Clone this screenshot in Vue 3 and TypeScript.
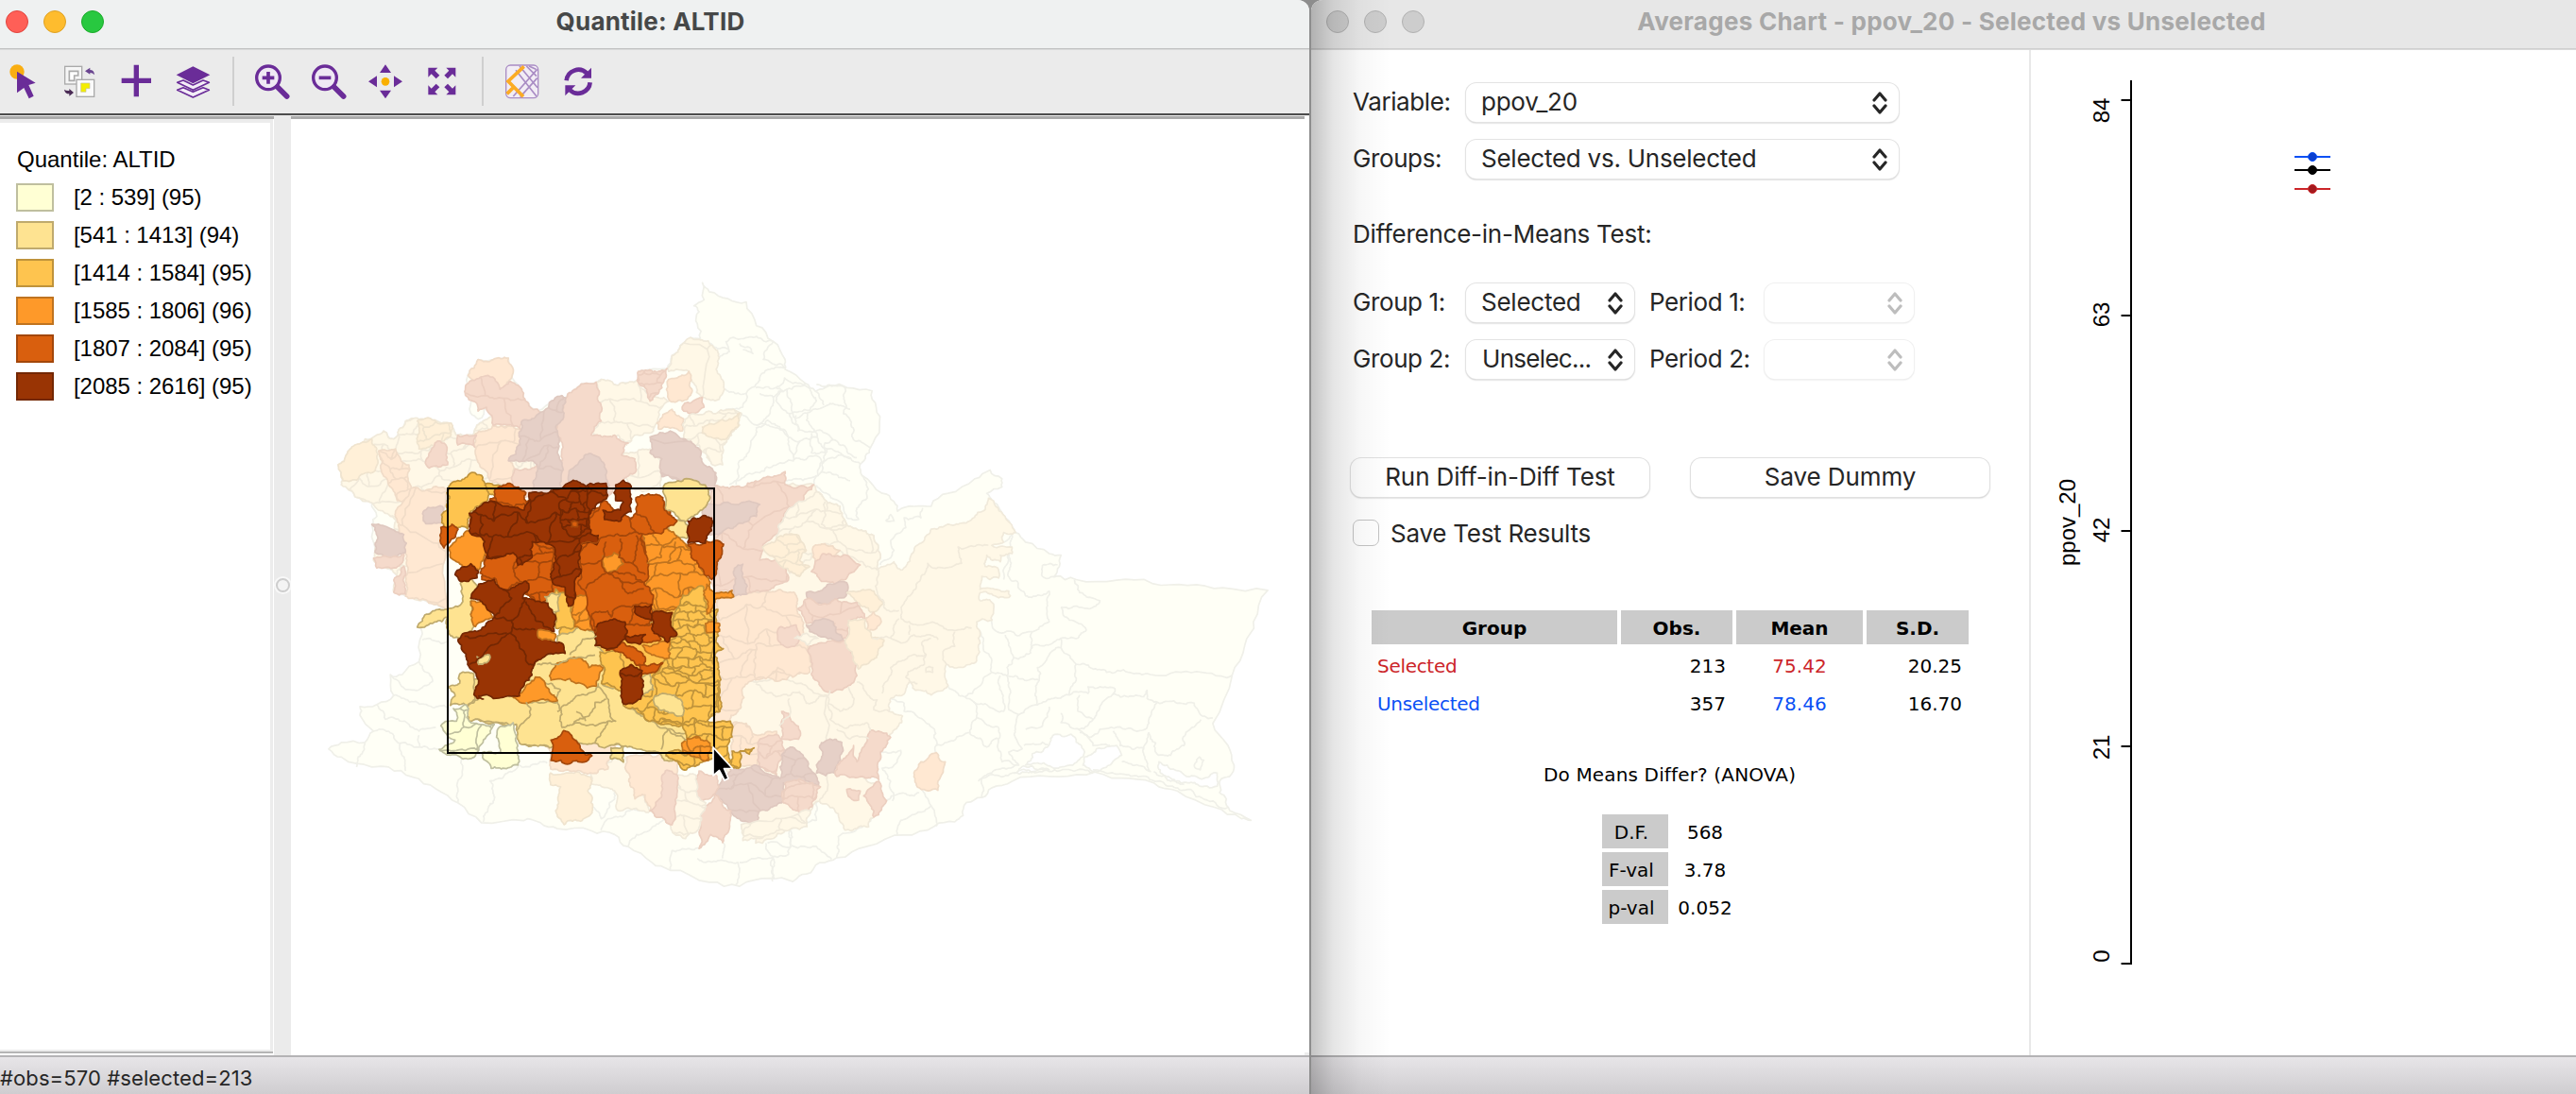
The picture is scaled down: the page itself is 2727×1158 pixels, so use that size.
<script setup lang="ts">
type Pt = [number, number]
type Space = 'a' | 'b' | 'c'

interface Region {
  cls: string
  d: string
  mesh?: string
  clip: string
}

/* Three survey sheets share the canvas; each has its own origin and scale. */
const sheets: Record<Space, (x: number, y: number) => Pt> = {
  a: (x, y) => [340 + x / 2.8, 290 + y / 2.376],
  b: (x, y) => [460 + x / 3, 490 + y / 3],
  c: (x, y) => [800 + x / 2.8, 400 + y / 2.904],
}

function pts(space: Space, text: string): Pt[] {
  return text.trim().split(/\s+/).map((p) => {
    const [x, y] = p.split(',').map(Number)
    return sheets[space](x, y)
  })
}

function noise(x: number, y: number): number {
  const s = Math.sin(x * 12.9898 + y * 78.233) * 43758.5453
  return (s - Math.floor(s)) * 2 - 1
}

/* Midpoint displacement; symmetric in its ends so that shared borders agree. */
function split(p: Pt, q: Pt, depth: number, out: Pt[]): void {
  const dx = q[0] - p[0]
  const dy = q[1] - p[1]
  const len = Math.hypot(dx, dy)
  if (depth === 0 || len < 3) {
    out.push(q)
    return
  }
  const flip = p[0] < q[0] || (p[0] === q[0] && p[1] < q[1]) ? 1 : -1
  const off = (noise(p[0] + q[0], p[1] + q[1]) * Math.min(2.6, len * 0.2) * flip) / len
  const mid: Pt = [(p[0] + q[0]) / 2 - dy * off, (p[1] + q[1]) / 2 + dx * off]
  split(p, mid, depth - 1, out)
  split(mid, q, depth - 1, out)
}

function trace(points: Pt[], close: boolean, depth = 4): string {
  const out: Pt[] = [points[0]]
  for (let i = 1; i < points.length; i++) split(points[i - 1], points[i], depth, out)
  if (close) split(points[points.length - 1], points[0], depth, out)
  return 'M' + out.map((p) => p[0].toFixed(1) + ' ' + p[1].toFixed(1)).join('L') + (close ? 'Z' : '')
}

/* Honeycomb of irregular cells covering the box of a region. */
function meshOf(points: Pt[], size: number): string {
  const xs = points.map((p) => p[0])
  const ys = points.map((p) => p[1])
  const x0 = Math.floor(Math.min(...xs) / size) - 1
  const x1 = Math.ceil(Math.max(...xs) / size) + 1
  const y0 = Math.floor(Math.min(...ys) / size) - 1
  const y1 = Math.ceil(Math.max(...ys) / size) + 1
  const at = (i: number, j: number): Pt => [
    (i + noise(i * 3.1, j * 7.7) * 0.42) * size,
    (j + noise(j * 5.3, i * 2.9) * 0.42) * size,
  ]
  let d = ''
  for (let j = y0; j < y1; j++) {
    for (let i = x0; i < x1; i++) {
      d += trace([at(i, j), at(i + 1, j)], false, 3)
      if ((i + j) % 2 === 0) d += trace([at(i, j), at(i, j + 1)], false, 3)
    }
  }
  return d
}

let serial = 0
function region(cls: string, space: Space, text: string, mesh = 0): Region {
  const p = pts(space, text)
  return { cls, d: trace(p, true), mesh: mesh ? meshOf(p, mesh) : undefined, clip: 'clip-' + serial++ }
}

const outline = trace(
  [
    ...pts('a', '22,1195 60,1178 130,1178 155,1150 115,1110 115,1088 165,1083 215,1060 205,1008 240,1008 290,975 300,905 300,880 285,887 320,852 375,848 340,830 250,810 215,800 225,760 155,720 160,690 150,630 165,610 150,575 100,560 60,530 50,480 100,430 160,415 185,395 215,415 250,370 330,368 385,375 400,405 450,405 470,375 510,350 490,335 465,365 443,350 450,310 427,300 435,255 465,215 555,212 565,260 600,300 620,335 655,340 700,308 725,312 760,285 815,272 830,265 880,280 940,265 945,243 1025,238 1040,205 1095,160 1125,165 1115,125 1120,95 1105,80 1135,65 1130,22 1150,45 1205,62 1260,70 1290,130 1340,170 1375,215 1375,240 1435,275 1465,295 1510,280'),
    ...pts('c', '270,30 345,40 357,90 367,150 340,215 325,240 310,265 315,300 375,355 410,380 420,410 470,395 520,395 570,355 650,310 695,283 730,310 730,335 685,355 700,380 740,430 770,475 800,505 870,540 905,545 900,580 885,610 950,620 1070,622 1175,632 1280,638 1385,645 1518,653 1475,750 1450,820 1412,915 1355,1062 1400,1130 1418,1190 1405,1225 1375,1240 1375,1275 1395,1295 1405,1330 1468,1360 1440,1355 1360,1320 1250,1270 1180,1245 1080,1230 980,1220 870,1225 760,1240 700,1260 670,1290 625,1305 615,1345 590,1365 530,1378 440,1405 330,1440 240,1475 190,1490 150,1525 110,1548'),
    ...pts('a', '1330,1520 1240,1540 1150,1530 1035,1500 980,1480 910,1440 870,1410 800,1400 700,1395 650,1380 600,1375 475,1380 405,1330 340,1295 270,1265 200,1240 150,1240 60,1215'),
  ],
  true,
  2,
)

const paleLines: string[] = [
  ...[
    '130,1178 105,1240', '155,1150 200,1150 235,1180 250,1250', '165,1083 190,1120 240,1125 290,1150 340,1140', '235,1180 290,1190 290,1160', '215,1060 280,1075 330,1090 375,1090', '205,1008 250,1045 300,1040 330,1025 290,975', '300,920 375,925', '290,1190 350,1195 480,1210', '420,1215 405,1330', '585,1235 570,1250 500,1275 510,1330 480,1378', '585,1235 670,1230', '830,1400 850,1370 910,1350 975,1350', '910,1440 935,1410 1020,1370', '1035,1500 1040,1450 1120,1445', '1115,1470 1180,1475 1235,1480 1230,1538', '1240,1480 1340,1465 1340,1522', '1190,1430 1190,1470', '1340,1465 1385,1460 1390,1400', '805,1340 830,1370 870,1320 880,1290', '1120,165 1210,195 1200,170 1260,160 1340,170', '1210,195 1180,210', '1240,175 1280,200 1250,190', '1195,290 1260,300 1300,260 1330,240 1375,235', '1260,300 1250,335 1200,340 1190,370', '1300,300 1340,310 1380,290 1435,275', '1340,310 1320,360 1290,380 1245,350', '1290,390 1270,440 1240,470 1230,530', '1290,380 1370,395 1420,420 1400,470 1300,500 1210,530', '1420,420 1470,410 1440,350 1400,360 1380,290', '1470,410 1500,440 1568,465', '1440,350 1500,330 1568,340', '1500,440 1480,500 1460,530', '1480,500 1568,520', '1465,295 1490,330', '1340,170 1310,215 1375,235',
  ].map((t) => trace(pts('a', t), false)),
  ...[
    '0,30 60,30 85,0 140,20 180,70 160,100 100,110 60,70 80,40 60,30', '180,20 270,30', '265,30 260,110 280,130 285,180 340,215', '100,110 130,160 190,160 230,190 300,245', '165,170 165,230 205,230 205,200 230,190', '0,155 35,130 90,165 100,215 115,250 190,245 185,300 140,315 85,315', '190,265 260,240 310,265', '180,330 240,375 270,430 305,435 300,400 330,370 325,315 315,300', '120,115 125,165', '370,575 410,530 400,500 445,460 440,430 490,430 495,400', '385,440 400,420 410,440 385,440', '735,505 760,475', '750,540 755,620 775,625 800,670 870,655 865,700 870,750 815,780 770,790 715,780 700,740', '760,480 735,620', '850,575 850,610 890,610', '850,575 895,575', '945,620 960,660 1020,685 990,710 905,705', '905,705 930,745 980,775 955,800 905,800 815,830', '905,800 905,830 950,880 1040,905 1170,912 1412,915', '740,790 755,830 765,860 815,845 820,780', '765,860 745,890 745,915 840,930 835,890 890,830 905,830', '745,915 755,960 750,1020 780,1035 835,1005 840,930', '650,760 700,870 700,905 745,915', '700,905 660,950 620,980 565,940', '620,980 645,995 735,1025 725,915', '645,995 655,1045 635,1090 535,1130 530,1080 460,1025 440,1025 440,1000 400,985', '635,1090 685,1135 720,1110 720,1075 655,1045', '535,1130 535,1152', '780,1035 770,1080 790,1140 750,1150 780,1190', '720,1110 730,1180 780,1190 730,1200 670,1230 670,1290', '835,1005 860,995 930,975 950,930 950,880', '930,975 985,970 985,950 1065,955 1060,970 1150,980 1160,960 1160,985 1250,1000 1300,1000 1330,1040 1355,1045', '960,975 955,1025 1000,1050 1020,1010 1065,970', '905,1030 905,1060 960,1080 1000,1050', '1190,995 1170,1040 1155,1080 1020,1080 1000,1100 955,1080', '1320,1050 1275,1090 1270,1130 1230,1160 1195,1160 1165,1090', '800,1080 850,1070 870,1010', '795,1130 850,1120 870,1130', '1060,1085 1080,1130 1150,1140 1165,1090', '1150,1140 1170,1210 1085,1180', '1300,1195 1315,1165 1328,1175 1318,1205 1300,1195', '485,1260 520,1315 535,1378', '520,1315 430,1360 420,1405', '388,1300 420,1280 485,1275', '370,1150 430,1145 410,1190 375,1200 400,1240 405,1300', '240,1475 245,1410 350,1350', '35,1430 180,1440 225,1480', '50,1548 50,1470 30,1430', '180,1290 180,1360 100,1390 105,1435', '660,1240 760,1215 870,1210 1000,1215', '1000,1205 1100,1220 1190,1240 1280,1265 1400,1320', '1180,1210 1230,1230 1270,1250', '960,1090 1000,1130 1050,1130',
  ].map((t) => trace(pts('c', t), false)),
]

const lagoons: string[] = [
  '800,1190 820,1155 865,1135 880,1100 935,1095 950,1120 975,1150 940,1190 890,1200 840,1185',
  '970,1190 1010,1140 1070,1130 1085,1160 1050,1190 1000,1210',
  '1195,1180 1220,1190 1270,1220 1330,1230 1368,1215 1368,1255 1310,1250 1230,1240 1200,1215',
  '765,1215 800,1195 870,1205 800,1212',
].map((t) => trace(pts('c', t), true))

const faded: Region[] = [
  region('f2', 'c', '175,330 205,375 250,395 270,450 300,465 350,485 370,545 360,590 410,565 435,590 470,530 520,465 600,450 680,405 690,370 770,475 735,475 735,505 700,515 760,520 760,540 725,545 725,565 685,545 680,580 720,590 720,615 670,610 665,650 750,655 755,670 665,660 665,685 700,690 700,745 655,750 660,800 665,815 655,870 615,890 565,880 560,910 570,945 520,975 455,935 435,975 400,985 395,1025 435,1040 395,1100 340,1085 300,1180 330,1240 365,1240 350,1350 335,1380 265,1390 245,1340 180,1290 150,1370 20,1430 0,1430 0,330'),
  region('f2', 'a', '1200,1100 1250,1035 1360,1005 1450,1045 1500,1060 1500,1300 1450,1350 1200,1250'),
  region('f2', 'a', '830,265 880,280 940,265 965,300 1030,320 1000,360 985,395 930,405 905,430 880,405 820,415 800,400 830,370 815,275', 28),
  region('f2', 'a', '1040,205 1095,160 1160,180 1180,210 1175,250 1195,290 1180,315 1130,310 1090,245 1030,245', 46),
  region('f2', 'a', '60,480 130,415 185,395 215,415 250,370 330,368 385,375 400,405 450,405 470,375 510,350 600,380 640,500 560,530 375,540 375,850 300,820 215,800 225,760 155,720 160,690 245,720 225,620 150,575 100,560 60,530', 17),
  region('f2', 'a', '890,455 975,440 1010,480 1010,540 920,540', 24),
  region('f4', 'a', '1165,800 1225,810 1330,800 1400,800 1420,860 1440,930 1450,985 1380,1020 1290,1020 1250,1040 1245,1090 1215,1110 1200,1180 1165,1180', 24),
  region('f5', 'a', '1160,530 1210,540 1300,520 1375,497 1375,530 1460,530 1430,570 1375,600 1360,650 1310,680 1300,720 1380,720 1385,770 1340,790 1260,805 1165,800 1165,600', 32),
  region('f6', 'a', '1130,580 1300,580 1290,610 1220,640 1130,660'),
  region('f6', 'a', '1225,740 1250,730 1262,805 1225,810'),
  region('f2', 'c', '180,350 205,375 250,395 270,450 300,465 350,485 370,545 360,590 300,560 200,510 160,560 100,600 60,520 70,450 100,400', 20),
  region('f3', 'c', '20,520 90,480 130,490 150,530 130,560 160,580 130,610 60,560', 13),
  region('f4', 'c', '170,520 205,510 250,530 210,560 180,580', 0),
  region('f5', 'c', '165,595 200,540 270,545 310,575 270,615 240,635 190,620'),
  region('f6', 'c', '150,660 190,655 240,630 270,630 268,670 240,680 200,695 155,685'),
  region('f3', 'c', '270,660 350,655 380,690 340,720 300,690'),
  region('f5', 'c', '125,710 150,680 200,695 240,680 300,690 325,740 280,745 270,800 240,800 235,755 200,745 150,755', 28),
  region('f4', 'c', '325,745 350,720 370,755 330,780'),
  region('f6', 'c', '150,760 180,745 230,750 240,785 260,805 200,795 160,780'),
  region('f4', 'c', '0,820 130,820 160,850 160,905 130,905 110,920 65,890 30,925 0,925'),
  region('f5', 'c', '65,800 75,765 120,760 130,800 110,825 75,820'),
  region('f5', 'c', '160,825 270,805 300,870 300,915 270,950 210,965 165,910'),
  region('f3', 'c', '270,800 275,745 325,745 345,800 380,805 350,865 305,895 270,830'),
  region('f2', 'c', '115,800 150,785 185,800 150,820'),
  region('f4', 'a', '1220,1130 1260,1130 1300,1160 1350,1150 1350,1200 1300,1240 1240,1235 1215,1190', 16),
  region('f5', 'a', '1365,1100 1385,1105 1420,1150 1415,1170 1365,1170'),
  region('f5', 'a', '1300,1170 1355,1160 1370,1210 1350,1260 1300,1240', 14),
  region('f6', 'a', '1160,1290 1200,1260 1215,1245 1300,1240 1315,1255 1360,1270 1365,1210 1390,1190 1430,1215 1475,1290 1430,1275 1370,1280 1365,1330 1300,1350 1290,1385 1240,1370 1205,1340 1165,1310', 19),
  region('f5', 'a', '1365,1310 1375,1280 1430,1275 1480,1290 1455,1340 1430,1362 1370,1330', 13),
  region('f5', 'a', '1120,1350 1165,1310 1215,1350 1210,1395 1190,1430 1155,1410 1120,1445'),
  region('f5', 'a', '1100,1300 1120,1250 1170,1260 1180,1290 1150,1320 1110,1320'),
  region('f2', 'a', '1040,1260 1110,1260 1110,1300 1140,1330 1115,1400 1080,1420 1040,1400 1030,1330', 17),
  region('f2', 'a', '790,1240 900,1215 960,1320 975,1350 880,1350 870,1300 800,1280'),
  region('f2', 'a', '1245,1385 1450,1350 1440,1390 1350,1400 1300,1420 1250,1425', 18),
  region('f4', 'a', '905,1215 1060,1205 1050,1260 1020,1370 1040,1385 975,1350 960,1310 930,1320 905,1250'),
  region('f5', 'a', '1020,1250 1055,1260 1040,1385 975,1350 1010,1310'),
  region('f3', 'a', '680,1255 800,1265 790,1300 805,1340 790,1365 720,1385 695,1350 710,1290 680,1285'),
  region('f4', 'a', '670,1170 880,1180 850,1245 780,1255 680,1245'),
  region('f6', 'c', '220,1110 255,1120 250,1160 235,1215 180,1215 180,1190 195,1170 190,1130'),
  region('f5', 'c', '235,1215 290,1130 300,1180 340,1085 400,1105 370,1150 365,1235 330,1230 240,1225'),
  region('f5', 'c', '320,1285 365,1240 388,1300 350,1350'),
  region('f5', 'c', '270,1265 310,1270 305,1298 280,1290'),
  region('f4', 'c', '470,1220 490,1180 535,1152 562,1180 540,1240 540,1268 485,1260'),
  region('f3', 'a', '50,480 100,430 150,415 165,440 160,495 110,515 65,520'),
  region('f3', 'a', '285,370 385,375 385,405 340,430 290,440', 16),
  region('f4', 'a', '170,445 220,440 260,480 265,560 225,570 180,500', 13),
  region('f4', 'a', '225,590 265,540 375,540 375,850 330,830 250,810 250,760 245,690 225,620', 40),
  region('f6', 'a', '150,630 245,655 250,700 200,715 160,700 165,670'),
  region('f6', 'a', '305,595 360,585 360,625 310,628'),
  region('f5', 'a', '155,715 200,712 245,705 230,735 165,740'),
  region('f5', 'a', '215,800 215,770 245,735 250,805'),
  region('f5', 'a', '310,470 345,420 370,430 375,480 320,488'),
  region('f4', 'a', '455,405 510,380 600,390 590,450 560,470 575,530 500,520 460,460', 25),
  region('f5', 'a', '405,405 460,405 455,435 405,430'),
  region('f4', 'a', '435,255 465,215 555,212 565,260 545,290 520,320 490,280 440,260'),
  region('f5', 'a', '427,300 440,270 495,255 530,290 560,270 600,300 620,335 660,350 650,370 595,370 590,390 510,380 490,335 465,345 450,320', 30),
  region('f5', 'a', '700,380 725,312 760,285 815,272 830,370 800,405 870,405 910,425 890,455 930,465 930,500 850,560 560,560 575,490 640,480 715,470'),
  region('f6', 'a', '595,370 660,345 700,308 725,312 720,350 695,385 710,470 715,560 620,560 640,480 555,470 590,430', 24),
  region('f6', 'a', '735,495 800,452 840,480 850,550 735,550'),
  region('f5', 'a', '940,245 1025,238 1000,300 975,320 965,290 945,280', 14),
  region('f4', 'a', '1030,265 1090,245 1095,305 1070,320 1030,315'),
  region('f5', 'a', '1070,335 1130,310 1135,335 1110,350 1075,345'),
  region('f4', 'a', '995,375 1040,340 1075,365 1070,395 1000,390'),
  region('f2', 'a', '1080,365 1150,345 1245,350 1240,380 1190,430 1190,480 1160,480 1120,430 1080,425', 15),
  region('f3', 'a', '1130,385 1200,370 1240,350 1235,385 1200,415 1130,400'),
  region('f6', 'a', '975,410 1035,395 1085,420 1120,440 1135,480 1170,500 1160,545 1080,530 1010,510 1010,465 975,450', 34),
]

const fadedLines: string[] = [
  '430,740 435,700 465,660 490,610 510,570 530,585 610,570 600,520 690,515', '365,590 355,640 385,710 425,715', '430,740 480,760 545,760 575,775 640,770', '345,800 400,800 430,815 470,790 540,805', '455,760 455,790', '400,800 410,760 425,740', '560,835 555,850 565,880', '375,970 400,890 470,850 505,850 495,810 520,800', '505,850 500,880 445,920 480,940', '505,890 525,890 525,905 505,905 505,890', '560,835 590,825 590,780', '300,935 360,990 350,1020 395,1025', '275,950 290,1000 250,1025 215,1000 220,960', '215,1000 220,1050 260,1075 330,1060 340,1085', '0,940 60,980 130,965 150,1000 215,980', '100,985 100,1040 70,1070', '240,1080 280,1110 335,1110', '205,380 195,450 220,465 270,450',
].map((t) => trace(pts('c', t), false))

/* Ground colours under the selected tracts, so that neighbours meet without gaps. */
const ground: { cls: string; d: string }[] = (
  [
    ['s2', '100,690 400,600 600,760 850,850 720,905 520,890 450,880 365,900 272,888 262,830 120,815'],
    ['s3', '385,430 640,540 760,430 870,420 890,500 890,800 700,820 560,740 520,640 400,560'],
    ['s5', '115,175 190,110 290,130 350,100 490,150 545,130 600,180 645,170 660,120 730,130 760,185 720,225 680,340 690,500 600,560 500,535 450,430 330,440 150,370 165,300 125,230'],
    ['s4', '665,235 740,215 860,300 865,400 780,450 700,470 670,390'],
  ] as [string, string][]
).map(([cls, t]) => ({ cls, d: trace(pts('b', t), true) }))

const selected: Region[] = [
  region('s2', 'b', '105,775 160,735 250,740 290,760 390,760 400,720 370,700 300,690 330,620 385,590 390,550 450,525 515,545 510,580 535,600 530,700 590,720 600,770 680,820 740,845 790,860 830,840 860,880 800,920 730,945 700,915 600,900 540,905 510,890 460,890 450,880 365,905 270,890 260,830 215,825 110,820'),
  region('s2', 'b', '730,70 800,50 860,70 875,110 860,140 800,185 735,150 725,90'),
  region('s2', 'b', '740,195 775,180 805,200 800,240 750,235'),
  region('s2', 'b', '85,375 110,368 135,390 115,440 125,520 80,555 45,540 42,490 0,505 -55,522 -25,480 60,460 90,440'),
  region('s2', 'b', '80,670 125,670 130,740 105,770 50,770 65,740 45,710 80,700'),
  region('s2', 'b', '560,905 600,900 600,950 560,940'),
  region('s1', 'b', '60,780 100,768 110,820 140,830 190,830 155,880 130,930 90,940 15,910 65,880 20,835 70,820', 22),
  region('s1', 'b', '205,840 250,825 260,870 265,960 180,970 150,920 210,920'),
  region('s3', 'b', '45,75 120,30 150,40 160,65 190,75 170,115 130,140 105,210 30,200 30,155 40,150'),
  region('s3', 'b', '160,70 215,75 220,95 180,100'),
  region('s3', 'b', '385,400 440,440 440,525 385,525'),
  region('s3', 'b', '525,600 590,590 600,640 600,720 530,700 540,650'),
  region('s4', 'b', '660,225 740,210 770,235 830,290 860,350 870,400 800,430 780,460 700,470 690,420 665,380 675,340', 17),
  region('s3', 'b', '760,480 790,420 855,395 860,480 900,465 895,560 917,590 890,610 905,700 905,790 880,795 850,830 830,820 790,830 750,830 680,820 655,790 600,770 640,730 690,740 690,680 720,640 745,600 745,570 770,540'),
  region('s3', 'b', '760,480 800,440 860,460 890,500 885,680 830,700 740,650 745,570 770,540', 8),
  region('s3', 'b', '690,680 740,650 830,700 900,690 905,790 850,830 760,825 680,820 655,790 700,740', 15),
  region('s2', 'b', '700,740 740,735 780,750 790,800 740,790 700,770'),
  region('s2', 'b', '660,680 685,670 695,720 660,740'),
  region('s3', 'b', '790,830 850,820 890,825 940,820 945,870 930,910 960,970 890,940 800,975 735,930 740,920 830,920', 15),
  region('s3', 'b', '945,915 1015,905 1000,925 970,915 965,970 940,960'),
  region('s4', 'b', '45,270 105,215 155,235 160,290 140,340 90,330 50,300'),
  region('s4', 'b', '115,440 150,440 185,490 130,520'),
  region('s4', 'b', '370,690 385,640 430,620 480,630 490,650 535,650 515,710 485,715 430,685'),
  region('s4', 'b', '250,745 320,680 345,690 390,755 270,760'),
  region('s4', 'b', '445,420 485,420 490,480 500,530 445,520', 15),
  region('s4', 'b', '660,580 745,560 745,620 690,610'),
  region('s4', 'b', '860,510 905,510 905,535 865,540'),
  region('s4', 'b', '865,385 890,415 945,405 950,425 890,435 865,480 860,430'),
  region('s4', 'b', '785,890 840,870 875,890 870,945 830,935 790,920', 13),
  region('s5', 'b', '490,175 540,120 560,140 620,180 640,160 640,110 680,98 725,110 740,160 770,185 720,225 660,225 670,290 680,360 665,380 695,420 690,450 640,450 610,520 510,540 490,480 480,410 455,380 465,280 490,230'),
  region('s5', 'b', '190,90 240,65 290,95 295,135 250,140 200,125'),
  region('s5', 'b', '145,350 165,300 250,285 310,250 375,270 380,380 370,440 320,440 280,380 215,405 190,365'),
  region('s5', 'b', '250,330 310,250 375,270 380,380 370,440 320,440 280,380 255,350', 15),
  region('s5', 'b', '20,205 55,195 75,210 60,240 30,270'),
  region('s5', 'b', '805,260 885,250 918,258 910,300 880,370 840,330 815,300'),
  region('s5', 'b', '370,880 410,850 455,890 465,910 500,930 475,950 430,955 370,945'),
  region('s5', 'b', '545,595 600,570 640,590 670,620 665,660 620,620'),
  region('s5', 'b', '650,640 725,635 700,665 650,665'),
  region('s5', 'b', '600,510 690,510 720,560 670,570 600,545'),
  region('s4', 'b', '535,295 570,285 600,320 550,350 535,330'),
  region('s2', 'b', '350,425 400,415 395,470 370,475'),
  region('s6', 'b', '110,160 180,120 240,140 285,150 300,95 345,95 380,85 440,55 480,75 545,65 545,115 515,130 490,180 495,225 520,230 515,260 465,260 465,350 445,390 440,450 425,455 415,395 375,380 385,310 370,260 310,250 310,300 265,325 250,285 165,300 160,250 110,215', 21),
  region('s6', 'b', '395,130 440,85 485,85 490,210 450,240 400,190', 9),
  region('s6', 'b', '575,70 600,55 625,75 625,155 590,185 540,180 535,150 590,150 600,125 575,120'),
  region('s6', 'b', '805,185 880,175 880,215 860,255 805,255'),
  region('s6', 'b', '65,355 115,320 140,345 135,365 80,375'),
  region('s6', 'b', '115,430 140,385 190,370 215,400 290,375 300,395 280,430 320,440 360,445 385,490 380,535 330,530 345,555 410,580 415,605 355,610 330,625 300,690 270,740 140,740 155,750 125,735 140,690 105,640 75,560 95,540 160,520 190,490 150,440'),
  region('s6', 'b', '510,580 520,510 570,495 605,505 605,560 580,585'),
  region('s6', 'b', '635,455 690,450 690,500 640,480'),
  region('s6', 'b', '690,480 755,475 750,515 770,545 740,570 690,525'),
  region('s6', 'b', '605,550 670,545 655,575 610,565'),
  region('s6', 'b', '590,660 625,640 660,660 655,750 600,765'),
  region('s2', 'b', '135,615 175,610 165,635 140,640'),
  region('s4', 'b', '330,530 385,545 380,565 330,555'),
  region('s5', 'b', '435,188 455,188 455,203 435,203'),
]

const selectedLines: { cls: string; d: string }[] = (
  [
    ['s2', '290,760 305,800 260,850'], ['s2', '390,760 405,840 440,830 550,820 575,820 555,770 520,710 520,700'], ['s2', '440,830 500,790 510,760 545,750'], ['s2', '510,890 550,820'], ['s2', '740,845 720,910'], ['s2', '390,790 450,740 520,710'], ['s2', '430,610 470,560 515,550'], ['s2', '325,640 380,640 450,620 510,610'], ['s2', '740,845 800,880'], ['s2', '450,790 480,820'],
    ['s6', '240,540 110,640'], ['s6', '240,540 300,640 330,625'], ['s6', '95,550 230,540'], ['s6', '240,540 245,500 190,490'], ['s6', '245,500 290,430 280,430'], ['s6', '215,400 245,430 190,490'], ['s6', '290,440 320,500 380,535'], ['s6', '245,520 320,530'], ['s6', '590,670 660,665'],
    ['s5', '465,260 520,250 560,230 640,220 660,225'], ['s5', '545,250 530,310 550,350 590,375 660,380'], ['s5', '550,350 620,350 665,380'], ['s5', '590,240 585,300 630,320'], ['s5', '640,230 630,320 670,355'], ['s5', '650,240 670,290'], ['s5', '545,350 500,380 480,400'], ['s5', '590,375 615,415 665,400'], ['s5', '560,490 580,460 640,450'], ['s5', '620,180 640,220'], ['s5', '640,160 680,190 700,225'], ['s5', '465,320 530,310'], ['s5', '510,540 500,480 550,470 560,490'],
    ['s4', '675,320 720,300 730,260 770,235'], ['s4', '740,320 765,250'],
  ] as [string, string][]
).map(([cls, t]) => ({ cls, d: trace(pts('b', t), false) }))

const legend = [
  { color: '#ffffd4', edge: '#bfbf9f', label: '[2 : 539] (95)' },
  { color: '#fee391', edge: '#bfaa6d', label: '[541 : 1413] (94)' },
  { color: '#fec44f', edge: '#bf933b', label: '[1414 : 1584] (95)' },
  { color: '#fe9929', edge: '#bf731f', label: '[1585 : 1806] (96)' },
  { color: '#d95f0e', edge: '#a3470b', label: '[1807 : 2084] (95)' },
  { color: '#993404', edge: '#732703', label: '[2085 : 2616] (95)' },
]

const anova = [
  ['D.F.', '568'],
  ['F-val', '3.78'],
  ['p-val', '0.052'],
]

const ticks = [
  { y: 107, label: '84', at: 118 },
  { y: 335, label: '63', at: 334 },
  { y: 563, label: '42', at: 562 },
  { y: 791, label: '21', at: 792 },
  { y: 1021, label: '0', at: 1013 },
]

const means = [
  { y: 167, line: '#0a50f5', dot: '#0a3fd0' },
  { y: 181, line: '#000', dot: '#000' },
  { y: 201, line: '#cc2529', dot: '#a31a1e' },
]
</script>

<template>
  <div class="desktop">
    <section class="win map-win">
      <header class="titlebar">
        <div class="lights"><i class="red"></i><i class="amber"></i><i class="green"></i></div>
        <h1>Quantile: ALTID</h1>
      </header>
      <nav class="toolbar">
        <svg class="icon" viewBox="12 200 120 120">
          <circle cx="54" cy="230" r="23" fill="#f9ae12" />
          <path d="M54 229L113 265L91 272L107 307L92 315L76 281L54 297Z" fill="#6a2c98" />
        </svg>
        <svg class="icon" viewBox="192 200 120 120">
          <rect x="206" y="213" width="54" height="56" fill="#f6f6f6" stroke="#aaa" stroke-width="4" />
          <path d="M220 228h28v14h-12v16h-16z" fill="#fff" stroke="#aaa" stroke-width="5" />
          <rect x="243" y="255" width="56" height="54" fill="#fafafa" stroke="#aaa" stroke-width="4" />
          <path d="M257 266h28v17h-12v11h-16z" fill="#f4ee00" stroke="#c5c29a" stroke-width="2" />
          <path d="M270 228L286 217V224Q299 224 300 240Q294 233 286 233V238Z" fill="#6a4590" />
          <path d="M234 296L220 307V300Q206 300 204 286Q210 291 220 290V284Z" fill="#4a2b55" />
        </svg>
        <svg class="icon" viewBox="372 200 120 120">
          <path d="M425 208h16v42h39v16h-39v43h-16v-43h-39v-16h39z" fill="#6a2c98" />
        </svg>
        <svg class="icon" viewBox="552 200 120 120">
          <path d="M560 240L613 213L667 240L613 267Z" fill="#6a2c98" />
          <g fill="#f3edf7" stroke="#6a2c98" stroke-width="5" stroke-linejoin="round">
            <path d="M582 280L563 288L613 311L664 288L645 280L613 294Z" />
            <path d="M582 257L563 264L613 288L664 264L645 257L613 272Z" />
          </g>
        </svg>
        <span class="sep"></span>
        <svg class="icon" viewBox="804 200 120 120">
          <circle cx="852" cy="249" r="37" fill="#efe8f4" stroke="#6a2c98" stroke-width="10" />
          <path d="M881 278L911 308" stroke="#6a2c98" stroke-width="17" stroke-linecap="round" />
          <path d="M833 249h38M852 230v38" stroke="#6a2c98" stroke-width="11" />
        </svg>
        <svg class="icon" viewBox="804 200 120 120">
          <circle cx="852" cy="249" r="37" fill="#efe8f4" stroke="#6a2c98" stroke-width="10" />
          <path d="M881 278L911 308" stroke="#6a2c98" stroke-width="17" stroke-linecap="round" />
          <path d="M833 249h38" stroke="#6a2c98" stroke-width="11" />
        </svg>
        <svg class="icon" viewBox="174 200 120 120">
          <circle cx="234" cy="261" r="13" fill="#f9b000" />
          <path d="M234 207L252 233H216ZM234 315L252 289H216ZM180 261L207 243V279ZM288 261L261 243V279Z" fill="#6a2c98" />
        </svg>
        <svg class="icon" viewBox="358 204 120 120">
          <path
            d="M374 221h30l-9 9 15 15-11 11-15-15-10 10zM461 221h-30l9 9-15 15 11 11 15-15 10 10zM374 307h30l-9-9 15-15-11-11-15 15-10-10zM461 307h-30l9-9-15-15 11-11 15 15 10-10z"
            fill="#6a2c98"
          />
        </svg>
        <span class="sep"></span>
        <svg class="icon" viewBox="606 200 120 120">
          <rect x="617" y="209" width="102" height="104" rx="14" fill="#f2edf5" stroke="#a98cc4" stroke-width="4" />
          <path d="M660 212L717 280M648 225L714 308M682 212L714 244M716 222L640 308M716 250L662 310M690 212L712 222" fill="none" stroke="#a98cc4" stroke-width="5" />
          <path d="M674 213L624 260L672 309M620 300L644 276" fill="none" stroke="#fbab25" stroke-width="11" />
        </svg>
        <svg class="icon" viewBox="786 200 120 120">
          <path d="M809 258A38 38 0 0 1 874 235M884 264A38 38 0 0 1 820 288" fill="none" stroke="#6a2c98" stroke-width="14" />
          <path d="M888 217V250H855ZM805 306V273H838Z" fill="#6a2c98" />
        </svg>
      </nav>
      <div class="body">
        <aside class="legend">
          <div class="legend-inner">
            <p class="legend-title">Quantile: ALTID</p>
            <ul>
              <li v-for="item in legend" :key="item.label">
                <span class="swatch" :style="{ background: item.color, borderColor: item.edge }"></span>
                <span>{{ item.label }}</span>
              </li>
            </ul>
          </div>
        </aside>
        <div class="sash"><i></i></div>
        <div class="canvas">
          <svg class="map" viewBox="308 126 1073 988">
            <path class="f1" :d="outline" />
            <path v-for="(d, i) in lagoons" :key="'g' + i" class="lagoon" :d="d" />
            <path v-for="(d, i) in paleLines" :key="'p' + i" class="f1 line" :d="d" />
            <g v-for="r in faded" :key="r.clip" :class="r.cls">
              <path :d="r.d" />
              <template v-if="r.mesh">
                <clipPath :id="r.clip"><path :d="r.d" /></clipPath>
                <path class="line" :d="r.mesh" :clip-path="'url(#' + r.clip + ')'" />
              </template>
            </g>
            <path v-for="(d, i) in fadedLines" :key="'q' + i" class="f2 line" :d="d" />
            <path v-for="(u, i) in ground" :key="'u' + i" :class="u.cls" :d="u.d" />
            <g v-for="r in selected" :key="r.clip" :class="r.cls">
              <path :d="r.d" />
              <template v-if="r.mesh">
                <clipPath :id="r.clip"><path :d="r.d" /></clipPath>
                <path class="line" :d="r.mesh" :clip-path="'url(#' + r.clip + ')'" />
              </template>
            </g>
            <path v-for="(l, i) in selectedLines" :key="'s' + i" :class="[l.cls, 'line']" :d="l.d" />
            <rect x="474" y="517" width="282" height="280" fill="none" stroke="#000" stroke-width="2" />
            <path
              d="M755 791V821L761.500 815.500L767 826L771 824L766.500 813.500H775.500Z"
              fill="#000"
              stroke="#fff"
              stroke-width="2"
              stroke-linejoin="round"
            />
          </svg>
        </div>
      </div>
      <footer class="status">#obs=570 #selected=213</footer>
    </section>

    <section class="win chart-win">
      <header class="titlebar dim">
        <div class="lights"><i></i><i></i><i></i></div>
        <h1>Averages Chart - ppov_20 - Selected vs Unselected</h1>
      </header>
      <div class="body">
        <div class="controls">
          <div class="row">
            <label>Variable:</label>
            <div class="select wide">
              <span>ppov_20</span>
              <svg class="chev" viewBox="0 0 16 24"><path d="M2 9L8 2L14 9M2 15L8 22L14 15" /></svg>
            </div>
          </div>
          <div class="row">
            <label>Groups:</label>
            <div class="select wide">
              <span>Selected vs. Unselected</span>
              <svg class="chev" viewBox="0 0 16 24"><path d="M2 9L8 2L14 9M2 15L8 22L14 15" /></svg>
            </div>
          </div>
          <p class="heading">Difference-in-Means Test:</p>
          <div class="row">
            <label>Group 1:</label>
            <div class="select mid">
              <span>Selected</span>
              <svg class="chev" viewBox="0 0 16 24"><path d="M2 9L8 2L14 9M2 15L8 22L14 15" /></svg>
            </div>
            <label class="period">Period 1:</label>
            <div class="select small off">
              <span></span>
              <svg class="chev" viewBox="0 0 16 24"><path d="M2 9L8 2L14 9M2 15L8 22L14 15" /></svg>
            </div>
          </div>
          <div class="row">
            <label>Group 2:</label>
            <div class="select mid">
              <span class="clipped">Unselec...</span>
              <svg class="chev" viewBox="0 0 16 24"><path d="M2 9L8 2L14 9M2 15L8 22L14 15" /></svg>
            </div>
            <label class="period">Period 2:</label>
            <div class="select small off">
              <span></span>
              <svg class="chev" viewBox="0 0 16 24"><path d="M2 9L8 2L14 9M2 15L8 22L14 15" /></svg>
            </div>
          </div>
          <div class="buttons">
            <div class="button">Run Diff-in-Diff Test</div>
            <div class="button">Save Dummy</div>
          </div>
          <div class="check"><i></i><span>Save Test Results</span></div>
          <div class="stats">
            <b>Group</b><b>Obs.</b><b>Mean</b><b>S.D.</b>
            <span class="name red">Selected</span><span class="num">213</span><span class="mean red">75.42</span><span class="num">20.25</span>
            <span class="name blue">Unselected</span><span class="num">357</span><span class="mean blue">78.46</span><span class="num">16.70</span>
          </div>
          <p class="question">Do Means Differ? (ANOVA)</p>
          <div class="anova">
            <template v-for="row in anova" :key="row[0]">
              <span class="key">{{ row[0] }}</span><span>{{ row[1] }}</span>
            </template>
          </div>
        </div>
        <div class="plot">
          <svg viewBox="2150 53 577 1064">
            <g stroke="#000" stroke-width="2">
              <path d="M2256 86V1022" />
              <path v-for="t in ticks" :key="t.label" :d="'M2245.500 ' + t.y + 'H2256'" />
            </g>
            <g class="axis-text">
              <text v-for="t in ticks" :key="t.label" :transform="'translate(2233 ' + t.at + ') rotate(-90)'">{{ t.label }}</text>
              <text transform="translate(2197 554) rotate(-90)">ppov_20</text>
            </g>
            <g v-for="m in means" :key="m.y">
              <path :d="'M2429 ' + m.y + 'H2467'" :stroke="m.line" stroke-width="2" />
              <circle cx="2448" :cy="m.y" r="4.500" :fill="m.dot" :stroke="m.line" />
            </g>
          </svg>
        </div>
      </div>
      <footer class="status"></footer>
    </section>
  </div>
</template>

<style>
html,
body {
  margin: 0;
  overflow: hidden;
}
</style>

<style scoped>
.desktop {
  display: flex;
  gap: 2px;
  width: 2727px;
  height: 1158px;
  overflow: hidden;
  background: #8d8d8d;
  font-family: Inter, 'Liberation Sans', sans-serif;
  color: #262626;
}
p,
h1,
ul {
  margin: 0;
  padding: 0;
}
.win {
  display: flex;
  flex-direction: column;
  position: relative;
  overflow: hidden;
}
.map-win {
  width: 1386px;
  flex: none;
  background: #ececec;
  border-top-right-radius: 12px;
}
.chart-win {
  flex: 1;
  background: #fff;
  border-top-left-radius: 12px;
}
.chart-win::after {
  content: '';
  position: absolute;
  inset: 0 auto 0 0;
  width: 84px;
  background: linear-gradient(90deg, rgba(0, 0, 0, 0.23), rgba(0, 0, 0, 0.1) 28%, rgba(0, 0, 0, 0.03) 62%, transparent);
  pointer-events: none;
}
.titlebar {
  display: flex;
  align-items: center;
  justify-content: center;
  position: relative;
  height: 51px;
  flex: none;
  background: #eff1f1;
  border-bottom: 1px solid #c0c1c1;
  box-shadow: 0 1px #dadada;
}
.titlebar.dim {
  background: #e7e7e7;
  border-color: #cfcfcf;
}
.lights {
  position: absolute;
  left: 6px;
  top: 11px;
  display: flex;
  gap: 16px;
}
.dim .lights {
  left: 16px;
}
.lights i {
  box-sizing: border-box;
  width: 24px;
  height: 24px;
  border-radius: 50%;
  background: #cdcdcd;
  border: 1px solid #b0b0b0;
}
.lights .red {
  background: #ff5f57;
  border-color: #e0443e;
}
.lights .amber {
  background: #febc2e;
  border-color: #dea123;
}
.lights .green {
  background: #28c840;
  border-color: #1aab29;
}
h1 {
  font-size: 26px;
  font-weight: 700;
  line-height: 46px;
  letter-spacing: 0.2px;
  padding-bottom: 6px;
  padding-right: 9px;
  color: #464848;
  white-space: nowrap;
}
.dim h1 {
  color: #a8a8a8;
  letter-spacing: 0.26px;
  padding-left: 17px;
  padding-right: 0;
}
.toolbar {
  display: flex;
  align-items: center;
  gap: 20px;
  height: 68px;
  flex: none;
  padding-left: 4px;
  border-bottom: 2px solid #4c4c4c;
  background: #ebebeb;
}
.icon {
  width: 40px;
  height: 40px;
  flex: none;
}
.sep {
  width: 2px;
  height: 52px;
  margin-left: 2px;
  background: #cfcfcf;
}
.body {
  display: flex;
  flex: 1;
  min-height: 0;
}
.legend {
  width: 290px;
  box-sizing: border-box;
  border-top: 3px solid #aaa;
  margin-top: 1px;
  background: #fff;
  padding-bottom: 4px;
}
.legend-inner {
  box-sizing: border-box;
  width: 289px;
  height: 100%;
  background: #fff;
  border: solid #ececec;
  border-width: 4px 3px 2px 0;
  box-shadow: 0 2px #b5b5b5;
  padding: 25px 0 0 17px;
  font: 24px/28px 'Liberation Sans', Arial, sans-serif;
  color: #000;
}
.legend-title {
  height: 34px;
  line-height: 27px;
  padding-left: 1px;
}
.legend ul {
  list-style: none;
}
.legend li {
  display: flex;
  align-items: center;
  gap: 21px;
  height: 40px;
  letter-spacing: -0.05px;
  white-space: nowrap;
}
.swatch {
  box-sizing: border-box;
  width: 40px;
  height: 30px;
  border: 2px solid;
}
.legend li span:last-child {
  padding-bottom: 1px;
}
.sash {
  display: flex;
  align-items: center;
  justify-content: center;
  width: 18px;
  background: #ebebeb;
}
.sash i {
  width: 11px;
  height: 11px;
  border-radius: 50%;
  border: 2px solid #cdcdcd;
  background: #f4f4f4;
  box-shadow: 0 0 0 2px #f8f8f8;
}
.canvas {
  flex: 1;
  margin: 1px 5px 3px 0;
  border-top: 3px solid #aaa;
  background: #fff;
  box-shadow: 5px 0 #fff, 0 3px #fff;
}
.map {
  display: block;
  width: 1073px;
  height: 988px;
}
.map path {
  stroke-width: 1.7;
  stroke-linejoin: round;
}
.map .line {
  fill: none;
}
.lagoon { fill: #fff; stroke: #f0f0e9; }
.f1 { fill: #fffff6; stroke: #f0f0e9; }
.f2 { fill: #fff8e7; stroke: #f1eadb; }
.f3 { fill: #fff0d8; stroke: #f0e4cf; }
.f4 { fill: #ffe8d2; stroke: #f1dcc8; }
.f5 { fill: #f5dacb; stroke: #eccfc0; }
.f6 { fill: #e6d0c7; stroke: #dfc8bf; }
.s1 { fill: #ffffd4; stroke: #bfbf9f; }
.s2 { fill: #fee391; stroke: #bfaa6d; }
.s3 { fill: #fec44f; stroke: #bf933b; }
.s4 { fill: #fe9929; stroke: #bf731f; }
.s5 { fill: #d95f0e; stroke: #a3470b; }
.s6 { fill: #993404; stroke: #732703; }
.status {
  height: 39px;
  flex: none;
  border-top: 2px solid #b4b3b5;
  background: linear-gradient(#e7e5e8, #cfcdd0);
  font-size: 22px;
  line-height: 45px;
  letter-spacing: 0.1px;
  white-space: nowrap;
}
.controls {
  box-sizing: border-box;
  width: 762px;
  flex: none;
  border-right: 2px solid #e8e8e8;
  padding: 36px 0 0 44px;
  font-size: 26px;
  letter-spacing: -0.25px;
  white-space: nowrap;
}
.row {
  display: flex;
  align-items: center;
  height: 41px;
  margin-bottom: 19px;
}
.row label {
  width: 120px;
  padding-bottom: 2px;
  letter-spacing: -0.4px;
}
.row .period {
  width: 122px;
  margin-left: 16px;
}
.select {
  box-sizing: border-box;
  display: flex;
  align-items: center;
  justify-content: space-between;
  height: 41px;
  padding: 0 12px 0 16px;
  border-radius: 11px;
  background: #fff;
  box-shadow: 0 0 0 1px #e3e3e3, 0 1px 2px rgba(0, 0, 0, 0.35);
}
.select span {
  padding-bottom: 2px;
}
.select .clipped {
  padding-left: 1px;
  letter-spacing: -0.7px;
}
.wide {
  width: 458px;
}
.mid {
  width: 178px;
}
.small {
  width: 158px;
}
.off {
  box-shadow: 0 0 0 1px #f0f0f0, 0 1px 2px rgba(0, 0, 0, 0.16);
}
.chev {
  width: 16px;
  height: 24px;
  fill: none;
  stroke: #262626;
  stroke-width: 3.2;
  stroke-linecap: round;
  stroke-linejoin: round;
}
.off .chev {
  stroke: #bdbdbd;
}
.heading {
  height: 92px;
  padding-top: 24px;
  box-sizing: border-box;
  line-height: 32px;
}
.buttons {
  display: flex;
  gap: 44px;
  margin: 84px 0 0 -2px;
}
.button {
  width: 316px;
  height: 41px;
  border-radius: 11px;
  background: #fff;
  box-shadow: 0 0 0 1px #e0e0e0, 0 1px 2px rgba(0, 0, 0, 0.35);
  text-align: center;
  line-height: 39px;
  letter-spacing: -0.1px;
}
.check {
  display: flex;
  align-items: center;
  gap: 12px;
  height: 28px;
  margin-top: 24px;
}
.check i {
  box-sizing: border-box;
  width: 28px;
  height: 28px;
  border: 1.5px solid #c4c4c4;
  border-radius: 7px;
  background: #fff;
}
.stats {
  display: grid;
  grid-template-columns: 260px 118px 134px 108px;
  grid-template-rows: 36px 36px 36px;
  gap: 4px;
  margin: 68px 0 0 20px;
  font: 20px/38px 'DejaVu Sans', Verdana, sans-serif;
  letter-spacing: 0;
  color: #000;
}
.stats b {
  background: #cbcbcb;
  text-align: center;
}
.stats span {
  padding: 0 7px;
}
.stats .name {
  padding-left: 6px;
  letter-spacing: -0.3px;
}
.stats .num {
  text-align: right;
}
.stats .mean {
  text-align: center;
}
.stats .red {
  color: #cc2529;
}
.stats .blue {
  color: #0a50f5;
}
.question {
  margin: 44px 0 0 202px;
  font: 20px/28px 'DejaVu Sans', Verdana, sans-serif;
  letter-spacing: 0.15px;
  color: #000;
}
.anova {
  display: grid;
  grid-template-columns: 70px 70px;
  grid-auto-rows: 36px;
  gap: 4px;
  margin: 28px 0 0 264px;
  font: 20px/39px 'DejaVu Sans', Verdana, sans-serif;
  letter-spacing: 0;
  color: #000;
}
.anova span {
  text-align: center;
}
.anova .key {
  background: #cbcbcb;
  padding-right: 8px;
}
.plot {
  flex: 1;
}
.plot svg {
  display: block;
  width: 577px;
  height: 1064px;
}
.axis-text text {
  font: 24px 'Liberation Sans', Arial, sans-serif;
  text-anchor: middle;
  fill: #000;
}
</style>
